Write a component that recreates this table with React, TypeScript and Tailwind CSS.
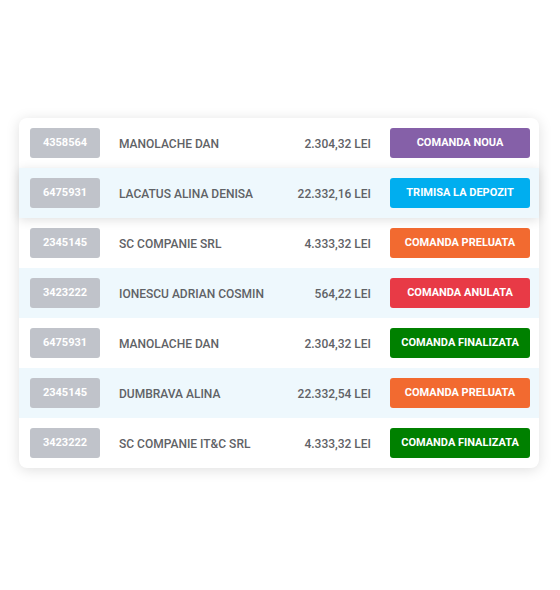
// Lista de comenzi: id, client, total și status.
const ROWS = [
  { id: '4358564', name: 'MANOLACHE DAN', total: '2.304,32 LEI', status: 'COMANDA NOUA', color: 'bg-[#8560a8]' },
  { id: '6475931', name: 'LACATUS ALINA DENISA', total: '22.332,16 LEI', status: 'TRIMISA LA DEPOZIT', color: 'bg-[#00aeef]', active: true },
  { id: '2345145', name: 'SC COMPANIE SRL', total: '4.333,32 LEI', status: 'COMANDA PRELUATA', color: 'bg-[#f26a30]' },
  { id: '3423222', name: 'IONESCU ADRIAN COSMIN', total: '564,22 LEI', status: 'COMANDA ANULATA', color: 'bg-[#e83a46]', tint: true },
  { id: '6475931', name: 'MANOLACHE DAN', total: '2.304,32 LEI', status: 'COMANDA FINALIZATA', color: 'bg-[#008000]' },
  { id: '2345145', name: 'DUMBRAVA ALINA', total: '22.332,54 LEI', status: 'COMANDA PRELUATA', color: 'bg-[#f26a30]', tint: true },
  { id: '3423222', name: 'SC COMPANIE IT&C SRL', total: '4.333,32 LEI', status: 'COMANDA FINALIZATA', color: 'bg-[#008000]' },
];

export default function App() {
  return (
    <div
      className="h-[590px] w-[560px] bg-white pt-[118px] pl-[19px]"
      style={{ fontFamily: 'Roboto, "Liberation Sans", sans-serif' }}
    >
      <div className="w-[520px] rounded-lg bg-white shadow-[0_2px_14px_rgba(0,0,0,0.13)]">
        {ROWS.map((r, i) => (
          <div
            key={i}
            className={`relative flex h-[50px] items-center pl-[11px] pr-[9px] ${
              r.active
                ? 'z-10 bg-[#eef8fd] shadow-[0_2px_10px_rgba(0,0,0,0.12)]'
                : r.tint
                ? 'bg-[#eef8fd]'
                : ''
            } ${i === 0 ? 'rounded-t-lg' : ''} ${i === ROWS.length - 1 ? 'rounded-b-lg' : ''}`}
          >
            <span className="flex h-[30px] w-[70px] items-center justify-center rounded-[3px] bg-[#c0c3ca] pt-px text-[11px] font-bold text-white">
              {r.id}
            </span>
            <span className="ml-[19px] flex-1 pt-[2px] text-[12px] font-medium text-[#5f6266]">{r.name}</span>
            <span className="pt-[2px] text-right text-[12px] font-medium text-[#5f6266]">{r.total}</span>
            <span
              className={`ml-[19px] flex h-[30px] w-[140px] items-center justify-center rounded-[3px] pt-px text-[11px] font-bold text-white ${r.color}`}
            >
              {r.status}
            </span>
          </div>
        ))}
      </div>
    </div>
  );
}
